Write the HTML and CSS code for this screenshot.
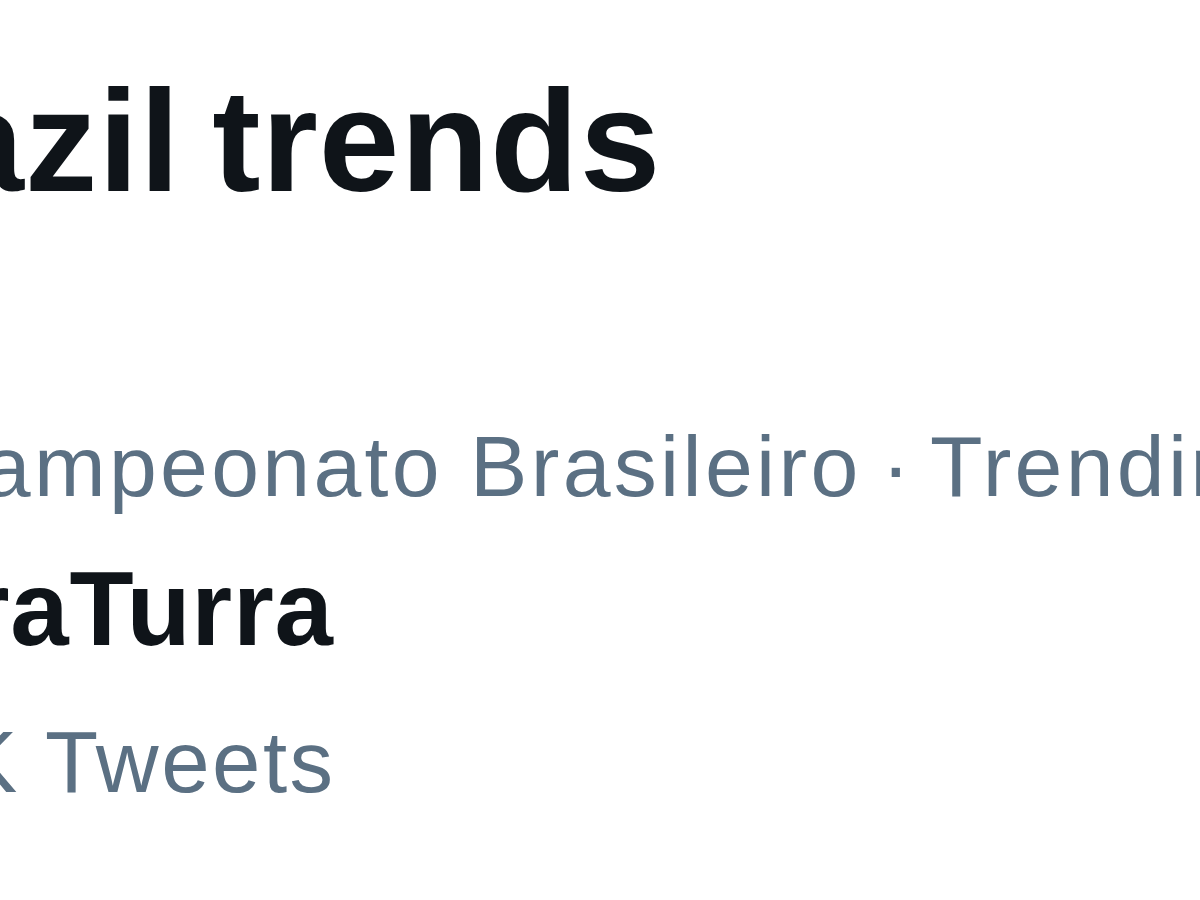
FILE: index.html
```html
<!DOCTYPE html>
<html lang="en">
<head>
<meta charset="utf-8">
<title>Brazil trends</title>
<link rel="stylesheet" href="styles.css">
</head>
<body>
<main class="viewport">
  <section class="panel">
    <h2 class="panel-title">Brazil trends</h2>
    <article class="trend">
      <div class="trend-meta">1 · Campeonato Brasileiro<span class="sep"> · </span>Trending</div>
      <div class="trend-name">#ForaTurra</div>
      <div class="trend-count">12.5K Tweets</div>
    </article>
  </section>
</main>
</body>
</html>
```
FILE: styles.css
```css
html, body {
  margin: 0;
  padding: 0;
  background: #ffffff;
}
.viewport {
  width: 1200px;
  height: 900px;
  overflow: hidden;
}
.panel {
  margin-left: -220px;
  padding-top: 60px;
  font-family: "Liberation Sans", Arial, sans-serif;
  white-space: nowrap;
}
.panel-title {
  margin: 0;
  font-size: 145px;
  line-height: 162px;
  font-weight: 700;
  letter-spacing: 1px;
  word-spacing: -10px;
  color: #0f1419;
}
.trend {
  margin-top: 196px;
}
.trend-meta {
  font-size: 86px;
  line-height: 96px;
  letter-spacing: 3.3px;
  color: #5b7083;
}
.sep {
  letter-spacing: 0;
  word-spacing: -4px;
}
.trend-name {
  margin-top: 36px;
  font-size: 105px;
  line-height: 118px;
  font-weight: 700;
  letter-spacing: 0.7px;
  color: #0f1419;
}
.trend-count {
  margin-top: 45px;
  font-size: 87px;
  line-height: 98px;
  letter-spacing: 2.5px;
  color: #5b7083;
}
```
